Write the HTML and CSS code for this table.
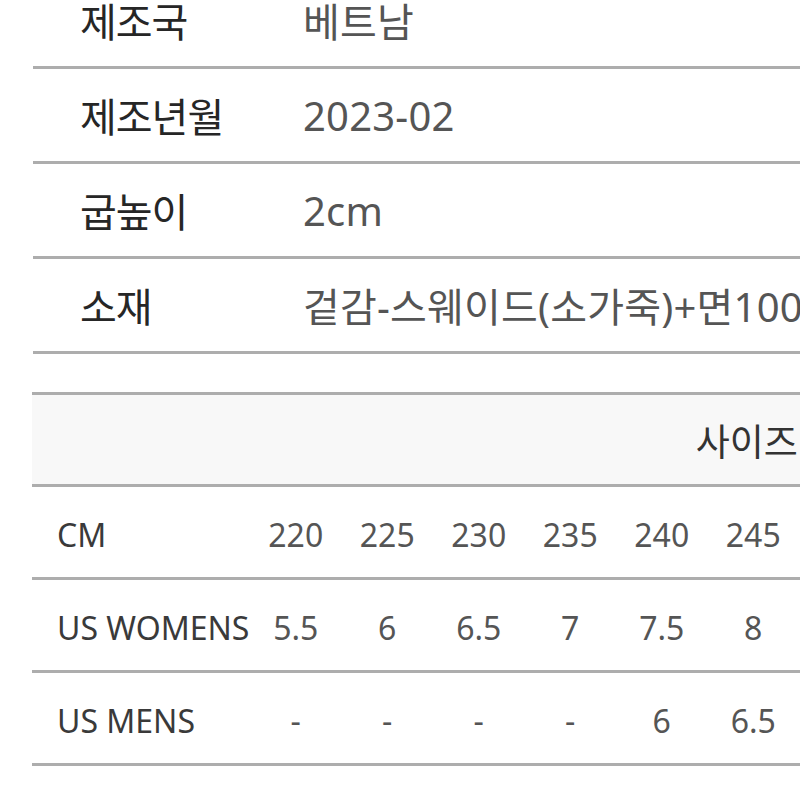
FILE: index.html
```html
<!DOCTYPE html>
<html lang="ko">
<head>
<meta charset="utf-8">
<link rel="stylesheet" href="styles.css">
</head>
<body>
<div class="page">
  <table class="info">
    <tr><th>제조국</th><td>베트남</td></tr>
    <tr><th>제조년월</th><td>2023-02</td></tr>
    <tr><th>굽높이</th><td>2cm</td></tr>
    <tr><th>소재</th><td>겉감-스웨이드(소가죽)+면100%</td></tr>
  </table>

  <table class="size">
    <colgroup>
      <col class="c-label">
      <col class="c-num"><col class="c-num"><col class="c-num"><col class="c-num"><col class="c-num"><col class="c-num"><col class="c-num"><col class="c-num"><col class="c-num"><col class="c-num"><col class="c-num"><col class="c-num"><col class="c-num">
    </colgroup>
    <tr class="head"><th colspan="14">사이즈</th></tr>
    <tr>
      <td class="lbl">CM</td>
      <td>220</td><td>225</td><td>230</td><td>235</td><td>240</td><td>245</td><td>250</td><td>255</td><td>260</td><td>265</td><td>270</td><td>275</td><td>280</td>
    </tr>
    <tr>
      <td class="lbl">US WOMENS</td>
      <td>5.5</td><td>6</td><td>6.5</td><td>7</td><td>7.5</td><td>8</td><td>8.5</td><td>9</td><td>9.5</td><td>10</td><td>10.5</td><td>11</td><td>11.5</td>
    </tr>
    <tr>
      <td class="lbl">US MENS</td>
      <td>-</td><td>-</td><td>-</td><td>-</td><td>6</td><td>6.5</td><td>7</td><td>7.5</td><td>8</td><td>8.5</td><td>9</td><td>9.5</td><td>10</td>
    </tr>
  </table>
</div>
</body>
</html>
```

FILE: styles.css
```css
html, body {
  margin: 0;
  padding: 0;
  overflow: hidden;
  background: #ffffff;
}

body {
  font-family: "Noto Sans", "Noto Sans CJK KR", sans-serif;
  color: #333333;
}

.page {
  margin-top: -26px;
  padding-left: 33px;
  width: 1600px;
}

.info {
  border-collapse: collapse;
  width: 1200px;
  white-space: nowrap;
}

.info th,
.info td {
  height: 92px;
  padding: 0;
  border-bottom: 3px solid #adadad;
  font-size: 40px;
  font-weight: 400;
  text-align: left;
  vertical-align: middle;
}

.info th {
  width: 223px;
  padding-left: 47px;
  color: #262626;
  letter-spacing: -1px;
}

.info td {
  color: #555555;
  letter-spacing: 0.2px;
}

.size {
  margin-top: 38px;
  margin-left: -1px;
  border-collapse: collapse;
  table-layout: fixed;
  border-top: 3px solid #adadad;
  white-space: nowrap;
}

.c-label { width: 218px; }
.c-num { width: 91.5px; }

.size th,
.size td {
  height: 89px;
  padding: 0;
  border-bottom: 3px solid #adadad;
  vertical-align: middle;
  text-align: center;
  font-weight: 400;
}

.size td {
  height: 85px;
  padding-top: 5px;
}

.size .head th {
  background: #f8f8f8;
  font-size: 37px;
  color: #333333;
  padding-left: 22px;
}

.size td {
  font-size: 32px;
  color: #555555;
}

.size td.lbl {
  text-align: left;
  padding-left: 25px;
  font-size: 32px;
  color: #3a3a3a;
}
```
